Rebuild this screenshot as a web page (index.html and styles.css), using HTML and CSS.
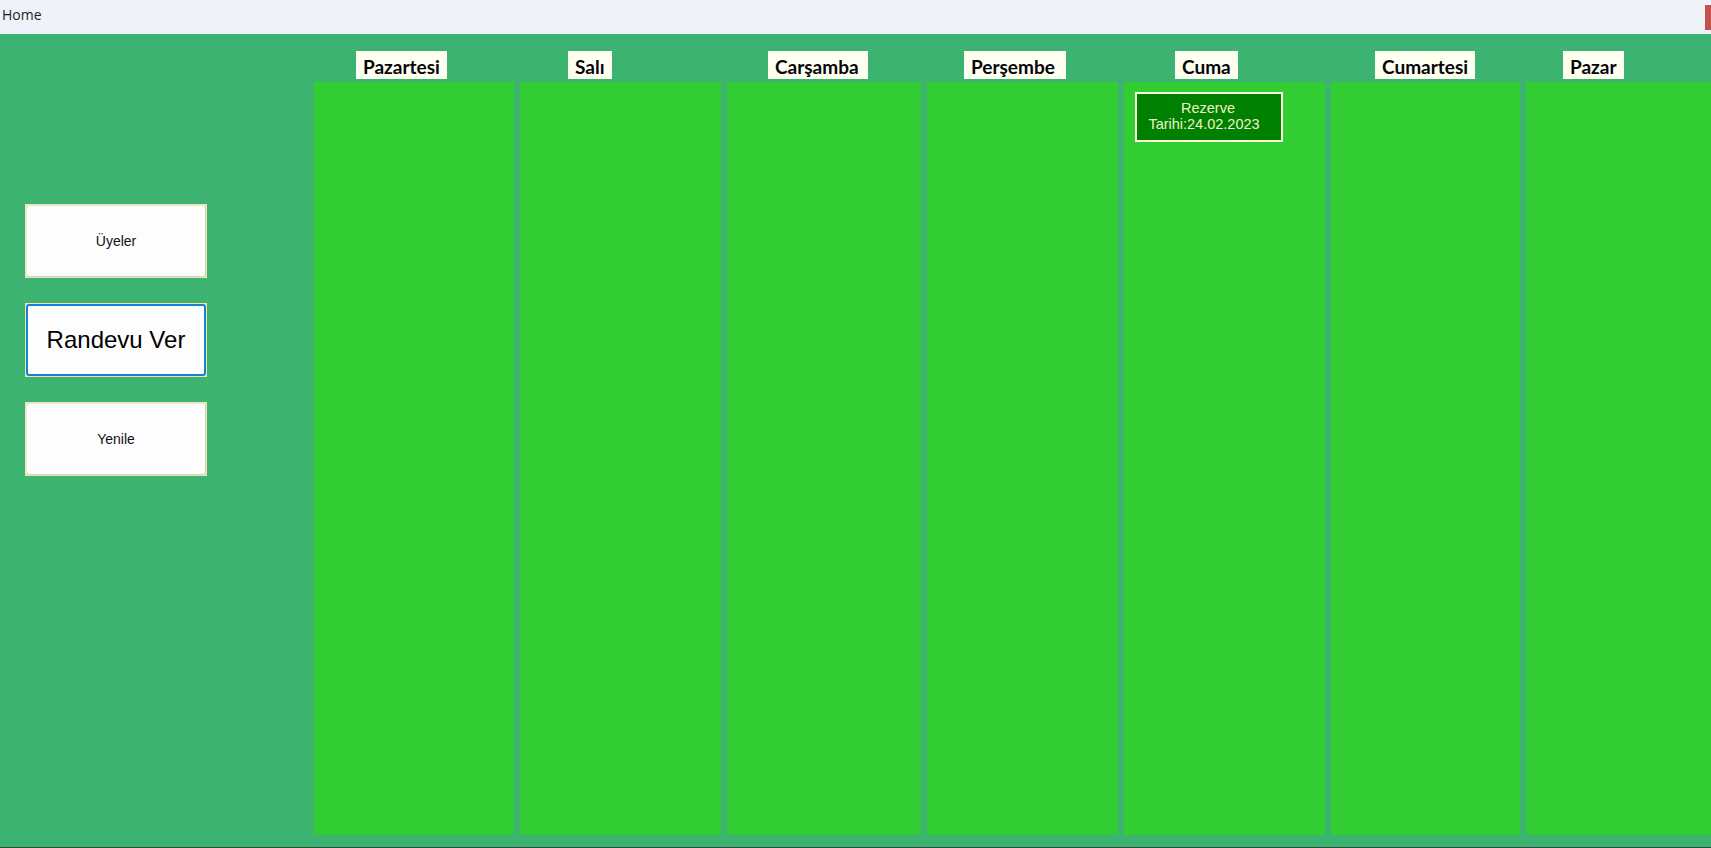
FILE: index.html
```html
<!DOCTYPE html>
<html lang="tr">
<head>
<meta charset="utf-8">
<title>Home</title>
<link rel="stylesheet" href="styles.css">
</head>
<body>
<div class="window">
  <header class="titlebar">
    <span class="title">Home</span>
    <span class="close-mark"></span>
  </header>
  <main class="content">
    <aside class="sidebar">
      <div class="btn-frame"><button class="btn">Üyeler</button></div>
      <div class="btn-frame"><button class="btn btn-big btn-focus">Randevu Ver</button></div>
      <div class="btn-frame"><button class="btn">Yenile</button></div>
    </aside>
    <section class="board">
      <div class="days">
        <span class="day d1">Pazartesi</span>
        <span class="day d2">Salı</span>
        <span class="day d3">Carşamba</span>
        <span class="day d4">Perşembe</span>
        <span class="day d5">Cuma</span>
        <span class="day d6">Cumartesi</span>
        <span class="day d7">Pazar</span>
      </div>
      <div class="columns">
        <div class="col"></div>
        <div class="col"></div>
        <div class="col"></div>
        <div class="col"></div>
        <div class="col">
          <div class="booking"><span class="bk-line1">Rezerve</span><br>Tarihi:24.02.2023</div>
        </div>
        <div class="col"></div>
        <div class="col"></div>
      </div>
    </section>
  </main>
  <div class="taskbar-edge"></div>
</div>
</body>
</html>
```

FILE: styles.css
```css
html, body {
  margin: 0;
  padding: 0;
}
body {
  width: 1711px;
  height: 848px;
  overflow: hidden;
  background: #3cb371;
  font-family: "Liberation Sans", Arial, sans-serif;
}
.window {
  display: flex;
  flex-direction: column;
  height: 848px;
}
.titlebar {
  height: 34px;
  flex: 0 0 34px;
  background: #eff2f9;
  display: flex;
  align-items: flex-start;
  box-sizing: border-box;
}
.title {
  font-family: "Open Sans", sans-serif;
  font-size: 14px;
  color: #1e1e1e;
  line-height: 20px;
  padding: 5px 0 0 2px;
}
.close-mark {
  margin-left: auto;
  margin-top: 5px;
  width: 6px;
  height: 25px;
  background: #c4504f;
}
.content {
  flex: 1;
  display: grid;
  grid-template-columns: 314px 1fr;
  min-height: 0;
}
.sidebar {
  display: flex;
  flex-direction: column;
  gap: 25px;
  padding: 170px 0 0 25px;
}
.btn-frame {
  width: 182px;
  height: 74px;
  box-sizing: border-box;
  padding: 1px;
  background: #f1e7a4;
}
.btn {
  display: block;
  width: 100%;
  height: 100%;
  margin: 0;
  box-sizing: border-box;
  background: #fdfdfd;
  border: 1px solid #cfcfcf;
  border-top-color: #e6e6e6;
  border-left-color: #e6e6e6;
  border-radius: 3px;
  font-family: "Liberation Sans", Arial, sans-serif;
  font-size: 14px;
  color: #111;
  padding: 0;
}
.btn-big {
  font-size: 24px;
  color: #000;
}
.btn-focus {
  border: 2px solid #1a7fd9;
}
.board {
  display: flex;
  flex-direction: column;
  padding: 17px 0 12px 0;
  min-width: 0;
}
.days,
.columns {
  display: grid;
  grid-template-columns: 200px 201px 194px 191px 201px 189px 185px;
  column-gap: 6px;
}
.days {
  height: 28px;
  margin-bottom: 3px;
}
.day {
  justify-self: start;
  height: 28px;
  box-sizing: border-box;
  padding: 4px 7px 0 7px;
  background: #fffff0;
  font-family: Lato, "Open Sans", sans-serif;
  font-weight: 700;
  font-size: 19px;
  color: #05050c;
  white-space: nowrap;
}
.d1 { margin-left: 42px; }
.d2 { margin-left: 48px; }
.d3 { margin-left: 41px; padding-right: 9px; }
.d4 { margin-left: 37px; padding-right: 11px; }
.d5 { margin-left: 51px; }
.d6 { margin-left: 44px; }
.d7 { margin-left: 37px; }
.columns {
  flex: 1;
}
.col {
  background: #32cd32;
  padding: 10px 0 0 11px;
}
.booking {
  width: 148px;
  height: 50px;
  box-sizing: border-box;
  border: 2px solid #fbf8dc;
  background: #008000;
  color: #f2f2c8;
  font-size: 14.5px;
  line-height: 16px;
  text-align: center;
  padding: 6px 10px 0 0;
}
.bk-line1 {
  display: inline-block;
  margin-left: 8px;
}
.taskbar-edge {
  height: 1px;
  flex: 0 0 1px;
  background: #2f4a3c;
}
```
